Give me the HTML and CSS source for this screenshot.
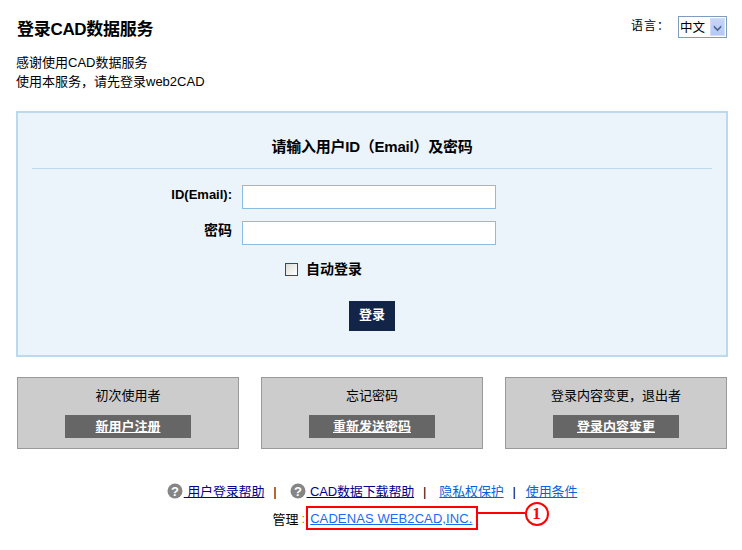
FILE: index.html
```html
<!DOCTYPE html>
<html lang="zh">
<head>
<meta charset="utf-8">
<title>登录CAD数据服务</title>
<link rel="stylesheet" href="styles.css">
</head>
<body>
<div class="page">
  <header class="top">
    <div class="intro">
      <h1 class="title">登录CAD数据服务</h1>
      <p class="lead">感谢使用CAD数据服务<br>使用本服务，请先登录web2CAD</p>
    </div>
    <div class="lang">
      <span class="lang-label">语言：</span>
      <span class="select">
        <span class="select-text">中文</span>
        <span class="select-btn">
          <svg width="14" height="19" viewBox="0 0 14 19"><path d="M3 7l4 4 4-4v2.5l-4 4-4-4z" fill="#4d6185"/></svg>
        </span>
      </span>
    </div>
  </header>

  <form class="panel">
    <h2 class="panel-title">请输入用户ID（Email）及密码</h2>
    <div class="rows">
      <div class="row">
        <label class="row-label">ID(Email):</label>
        <input class="field" type="text">
      </div>
      <div class="row">
        <label class="row-label row-label-cjk">密码</label>
        <input class="field" type="password">
      </div>
    </div>
    <label class="auto"><span class="check"></span>自动登录</label>
    <div class="submit-wrap"><button class="submit" type="button">登录</button></div>
  </form>

  <section class="cards">
    <div class="card">
      <div class="card-text">初次使用者</div>
      <a class="card-btn" href="#">新用户注册</a>
    </div>
    <div class="card">
      <div class="card-text">忘记密码</div>
      <a class="card-btn" href="#">重新发送密码</a>
    </div>
    <div class="card">
      <div class="card-text">登录内容变更，退出者</div>
      <a class="card-btn" href="#">登录内容变更</a>
    </div>
  </section>

  <footer class="foot">
    <div class="links">
      <a class="link dark" href="#"><svg class="help" width="16" height="16" viewBox="0 0 16 16"><circle cx="8" cy="8" r="7.5" fill="#858585"/><text x="8" y="12.5" text-anchor="middle" class="help-q">?</text></svg> 用户登录帮助</a>
      <span class="sep sep-wide">|</span>
      <a class="link dark" href="#"><svg class="help" width="16" height="16" viewBox="0 0 16 16"><circle cx="8" cy="8" r="7.5" fill="#858585"/><text x="8" y="12.5" text-anchor="middle" class="help-q">?</text></svg> CAD数据下载帮助</a>
      <span class="sep sep-wide">|</span>
      <a class="link" href="#">隐私权保护</a>
      <span class="sep sep-last">|</span>
      <a class="link" href="#">使用条件</a>
    </div>
    <div class="admin">
      <span>管理</span><span class="colon">:</span><span class="mark"><a class="link" href="#">CADENAS WEB2CAD,INC.</a><span class="mark-line"></span><span class="mark-num">1</span></span>
    </div>
  </footer>
</div>
</body>
</html>
```
FILE: styles.css
```css
* { box-sizing: border-box; }
html, body { margin: 0; padding: 0; background: #fff; }
body {
  font-family: "Liberation Sans", "Noto Sans CJK SC", sans-serif;
  font-size: 13px;
  color: #000;
}
.page { width: 742px; height: 550px; padding: 20px 14px 0 16px; overflow: hidden; }

.top { display: flex; justify-content: space-between; align-items: flex-start; height: 91px; }
.title { margin: 0 0 0 1px; font-size: 17px; letter-spacing: -0.3px; line-height: 20px; font-weight: bold; }
.lead { margin: 13px 0 0; font-size: 13px; line-height: 19px; }
.lang { display: flex; align-items: flex-start; font-size: 12px; margin: -4px 1px 0 0; }
.lang-label { line-height: 20px; width: 47px; letter-spacing: 1px; }
.select {
  display: flex; width: 49px; height: 22px;
  border: 1px solid #7f9db9; background: #fff; padding: 1px;
}
.select-text { flex: 1; font-size: 12.5px; line-height: 20px; }
.select-btn {
  width: 15px; background: linear-gradient(#c5d5fb, #b4c8f6);
  border: 1px solid #d2ddf8; display: flex; align-items: center; justify-content: center;
}

.panel {
  display: block; width: 712px; height: 246px; margin: 0;
  background: #ebf3fb; border: 2px solid #bcdaee; padding: 0 14px;
}
.panel-title {
  margin: 0; height: 56px; padding-top: 24px;
  font-size: 15px; letter-spacing: -0.25px; line-height: 20px; font-weight: bold; text-align: center;
  border-bottom: 1px solid #bcdaee;
}
.rows { display: flex; flex-direction: column; gap: 12px; margin-top: 16px; }
.row { display: flex; height: 24px; }
.row-label { width: 200px; font-size: 13px; font-weight: bold; text-align: right; line-height: 19px; }
.row-label-cjk { font-size: 14px; }
.field {
  width: 254px; height: 24px; margin: 0 0 0 10px; padding: 0;
  border: 1px solid #8cbde0; background: #fff; border-radius: 0; outline: none;
}
.auto {
  display: flex; align-items: center; margin: 14px 0 0 253px;
  font-size: 14px; font-weight: bold; line-height: 20px;
}
.check {
  width: 13px; height: 13px; margin-right: 8px;
  border: 1px solid #1c5180; background: linear-gradient(135deg, #dcdcd7, #fff);
}
.submit-wrap { margin: 22px 0 0 317px; }
.submit {
  display: block; width: 46px; height: 30px; padding: 0 0 6px; border: 0;
  background: #122447; color: #fff; font: bold 13px "Liberation Sans", "Noto Sans CJK SC", sans-serif;
}

.cards { display: flex; gap: 22px; margin: 20px 0 0 1px; }
.card {
  width: 222px; height: 72px; background: #ccc; border: 1px solid #999;
  display: flex; flex-direction: column; align-items: center;
}
.card-text { margin-top: 8px; line-height: 20px; font-size: 13px; }
.card-btn {
  display: block; width: 126px; height: 23px; margin-top: 9px;
  background: #666; color: #fff; font-size: 13px; font-weight: bold;
  text-align: center; line-height: 23px; text-decoration: underline;
}

.foot { margin-top: 34px; font-size: 13px; text-align: center; }
.links { display: flex; justify-content: center; gap: 9px; line-height: 18px; letter-spacing: -0.15px; }
.link { color: #0b62d6; text-decoration: underline; }
.dark { color: #00008b; }
.help { vertical-align: -3px; margin-right: 1px; }
.help-q { fill: #fff; font: bold 13px "Liberation Sans", sans-serif; }
.sep { color: #000; }
.sep-wide { margin-right: 4px; }
.sep-last { margin-right: 1px; }
.admin { display: flex; justify-content: center; align-items: center; margin: 5px 0 0 6px; height: 24px; }
.colon { color: #c87a00; margin: 0 1px 0 3px; }
.mark { position: relative; display: block; padding: 1px 3px 0 2px; border: 2px solid #f00; line-height: 20px; height: 24px; }
.mark .link { color: #1a6cf0; letter-spacing: 0.1px; }
.mark-line { position: absolute; left: 100%; top: 4px; width: 48px; height: 2px; margin-left: 1px; background: #f00; }
.mark-num {
  position: absolute; left: 100%; top: -6px; margin-left: 49px;
  width: 24px; height: 24px; border: 2px solid #f00; border-radius: 50%; background: #fff;
  color: #f00; font: bold 17px/20px "Liberation Serif", serif; text-align: center;
}
```
